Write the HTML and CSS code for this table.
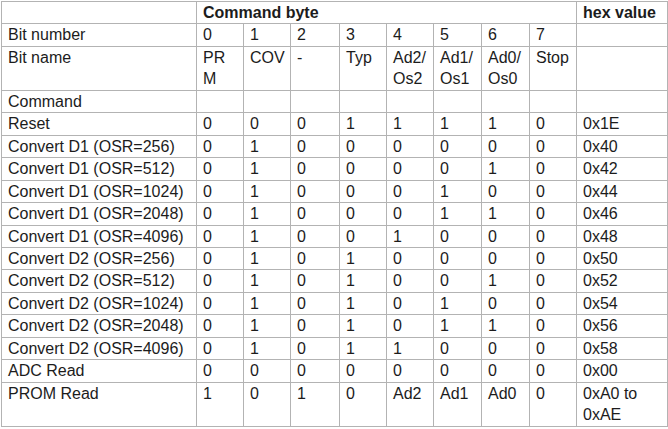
FILE: index.html
```html
<!DOCTYPE html>
<html lang="en">
<head>
<meta charset="utf-8">
<title>Command byte table</title>
<link rel="stylesheet" href="styles.css">
</head>
<body>
<div class="tbl">
  <div class="c"></div>
  <div class="c b span8">Command byte</div>
  <div class="c b">hex value</div>

  <div class="c">Bit number</div>
  <div class="c">0</div><div class="c">1</div><div class="c">2</div><div class="c">3</div>
  <div class="c">4</div><div class="c">5</div><div class="c">6</div><div class="c">7</div>
  <div class="c"></div>

  <div class="c">Bit name</div>
  <div class="c brk">PRM</div><div class="c brk">COV</div><div class="c brk">-</div><div class="c brk">Typ</div>
  <div class="c brk">Ad2/Os2</div><div class="c brk">Ad1/Os1</div><div class="c brk">Ad0/Os0</div><div class="c brk">Stop</div>
  <div class="c"></div>

  <div class="c">Command</div>
  <div class="c"></div><div class="c"></div><div class="c"></div><div class="c"></div>
  <div class="c"></div><div class="c"></div><div class="c"></div><div class="c"></div>
  <div class="c"></div>

  <div class="c">Reset</div>
  <div class="c">0</div><div class="c">0</div><div class="c">0</div><div class="c">1</div>
  <div class="c">1</div><div class="c">1</div><div class="c">1</div><div class="c">0</div>
  <div class="c">0x1E</div>

  <div class="c">Convert D1 (OSR=256)</div>
  <div class="c">0</div><div class="c">1</div><div class="c">0</div><div class="c">0</div>
  <div class="c">0</div><div class="c">0</div><div class="c">0</div><div class="c">0</div>
  <div class="c">0x40</div>

  <div class="c">Convert D1 (OSR=512)</div>
  <div class="c">0</div><div class="c">1</div><div class="c">0</div><div class="c">0</div>
  <div class="c">0</div><div class="c">0</div><div class="c">1</div><div class="c">0</div>
  <div class="c">0x42</div>

  <div class="c">Convert D1 (OSR=1024)</div>
  <div class="c">0</div><div class="c">1</div><div class="c">0</div><div class="c">0</div>
  <div class="c">0</div><div class="c">1</div><div class="c">0</div><div class="c">0</div>
  <div class="c">0x44</div>

  <div class="c">Convert D1 (OSR=2048)</div>
  <div class="c">0</div><div class="c">1</div><div class="c">0</div><div class="c">0</div>
  <div class="c">0</div><div class="c">1</div><div class="c">1</div><div class="c">0</div>
  <div class="c">0x46</div>

  <div class="c">Convert D1 (OSR=4096)</div>
  <div class="c">0</div><div class="c">1</div><div class="c">0</div><div class="c">0</div>
  <div class="c">1</div><div class="c">0</div><div class="c">0</div><div class="c">0</div>
  <div class="c">0x48</div>

  <div class="c">Convert D2 (OSR=256)</div>
  <div class="c">0</div><div class="c">1</div><div class="c">0</div><div class="c">1</div>
  <div class="c">0</div><div class="c">0</div><div class="c">0</div><div class="c">0</div>
  <div class="c">0x50</div>

  <div class="c">Convert D2 (OSR=512)</div>
  <div class="c">0</div><div class="c">1</div><div class="c">0</div><div class="c">1</div>
  <div class="c">0</div><div class="c">0</div><div class="c">1</div><div class="c">0</div>
  <div class="c">0x52</div>

  <div class="c">Convert D2 (OSR=1024)</div>
  <div class="c">0</div><div class="c">1</div><div class="c">0</div><div class="c">1</div>
  <div class="c">0</div><div class="c">1</div><div class="c">0</div><div class="c">0</div>
  <div class="c">0x54</div>

  <div class="c">Convert D2 (OSR=2048)</div>
  <div class="c">0</div><div class="c">1</div><div class="c">0</div><div class="c">1</div>
  <div class="c">0</div><div class="c">1</div><div class="c">1</div><div class="c">0</div>
  <div class="c">0x56</div>

  <div class="c">Convert D2 (OSR=4096)</div>
  <div class="c">0</div><div class="c">1</div><div class="c">0</div><div class="c">1</div>
  <div class="c">1</div><div class="c">0</div><div class="c">0</div><div class="c">0</div>
  <div class="c">0x58</div>

  <div class="c">ADC Read</div>
  <div class="c">0</div><div class="c">0</div><div class="c">0</div><div class="c">0</div>
  <div class="c">0</div><div class="c">0</div><div class="c">0</div><div class="c">0</div>
  <div class="c">0x00</div>

  <div class="c">PROM Read</div>
  <div class="c">1</div><div class="c">0</div><div class="c">1</div><div class="c">0</div>
  <div class="c">Ad2</div><div class="c">Ad1</div><div class="c">Ad0</div><div class="c">0</div>
  <div class="c">0xA0 to 0xAE</div>
</div>
</body>
</html>
```

FILE: styles.css
```css
html, body {
  margin: 0;
  padding: 0;
  background: #ffffff;
}

body {
  font-family: "Liberation Sans", Arial, Helvetica, sans-serif;
  font-size: 16px;
  color: #1c1c1c;
}

.tbl {
  display: grid;
  grid-template-columns: 195px 47px 47px 49px 47px 47px 48px 48px 47px 91px;
  width: max-content;
  margin: 1px 0 0 1px;
  border-left: 1px solid #b3b3b3;
  border-top: 1px solid #b3b3b3;
}

.c {
  border-right: 1px solid #b3b3b3;
  border-bottom: 1px solid #b3b3b3;
  padding: 0 5px 0 6px;
  line-height: 21.45px;
  min-width: 0;
}

.b {
  font-weight: bold;
}

.span8 {
  grid-column: span 8;
}

.brk {
  word-break: break-all;
}
```
